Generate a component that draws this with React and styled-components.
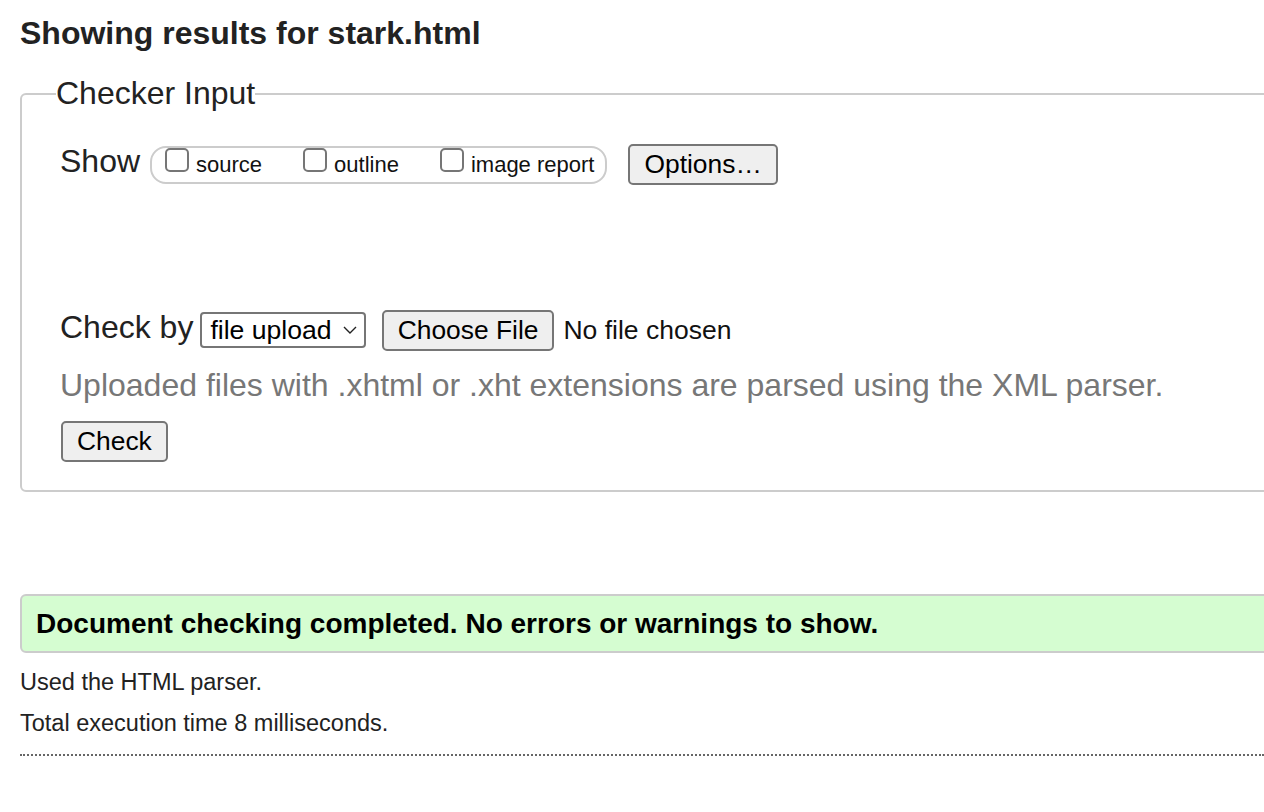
import React from 'react'
import styled, { createGlobalStyle } from 'styled-components'

const GlobalStyle = createGlobalStyle`
html, body {
    margin: 0;
    padding: 0;
    overflow: hidden;
    background: #fff;
}
body {
    font-family: "Liberation Sans", Arial, Helvetica, sans-serif;
    color: #222;
}
`

const Page = styled.div`
width: 1300px;
padding-left: 20px;
`

const Heading = styled.h2`
margin: 15px 0 23px;
font-size: 32px;
font-weight: bold;
line-height: 37px;
color: #222;
`

const Fieldset = styled.fieldset`
margin: 0;
border: 2px solid #ccc;
border-radius: 6px;
padding: 31px 0 28px 38px;
min-inline-size: 0;
`

const Legend = styled.legend`
font-size: 32px;
line-height: 37px;
padding: 0;
margin-left: -4px;
color: #222;
`

const Row = styled.div`
display: flex;
align-items: center;
margin-top: ${(p) => p.top || 0}px;
`

const Label = styled.span`
font-size: 32px;
line-height: 37px;
margin-right: ${(p) => p.gap}px;
margin-bottom: ${(p) => p.lift || 0}px;
`

const OptionGroup = styled.div`
display: flex;
align-items: center;
height: 34px;
border: 2px solid #ccc;
border-radius: 16px;
padding: 0 11px 0 13px;
margin-right: 21px;
`

const Option = styled.label`
display: flex;
align-items: center;
font-size: 22px;
line-height: 25px;
color: #111;
margin-left: ${(p) => (p.first ? 0 : 41)}px;
`

const Box = styled.input`
appearance: none;
-webkit-appearance: none;
width: 24px;
height: 24px;
margin: 0 7px 10px 0;
border: 2px solid #767676;
border-radius: 5px;
background: #fff;
`

const Button = styled.button`
height: 41px;
padding: 0 14px;
font-family: "Liberation Sans", Arial, Helvetica, sans-serif;
font-size: 26.4px;
color: #000;
background: #efefef;
border: 2px solid #767676;
border-radius: 5px;
margin-left: ${(p) => p.left || 0}px;
`

const Select = styled.div`
display: inline-flex;
align-items: center;
height: 36px;
box-sizing: border-box;
padding: 0 7px 0 8px;
border: 2px solid #767676;
border-radius: 4px;
font-size: 26.6px;
color: #000;
margin-right: 16px;
svg {
    margin-left: 11px;
}
`

const FileName = styled.span`
font-size: 26.5px;
color: #111;
margin-left: 9px;
`

const Hint = styled.p`
margin: 16px 0 0;
font-size: 32px;
line-height: 37px;
color: #777;
`

const Success = styled.p`
margin: 102px 0 0;
border: 2px solid #ccc;
border-radius: 6px;
background: #d5fdd1;
padding: 12px 14px 11px;
font-size: 28px;
line-height: 32px;
font-weight: bold;
color: #000;
`

const Info = styled.p`
margin: ${(p) => p.top}px 0 0;
font-size: 23.5px;
line-height: 27px;
color: #222;
`

const Rule = styled.hr`
margin: 17px 0 0;
border: 0;
border-top: 2px dotted #666;
height: 0;
width: 1244px;
`

const Chevron = () => (
    <svg width="14" height="8" viewBox="0 0 14 8">
        <path d="M1 1 L7 7 L13 1" fill="none" stroke="#222" strokeWidth="1.4" />
    </svg>
)

const App = () => {
    return (
        <Page>
            <GlobalStyle />
            <Heading>Showing results for stark.html</Heading>
            <Fieldset>
                <Legend>Checker Input</Legend>
                <Row>
                    <Label gap={10} lift={6}>Show</Label>
                    <OptionGroup>
                        <Option first><Box type="checkbox" />source</Option>
                        <Option><Box type="checkbox" />outline</Option>
                        <Option><Box type="checkbox" />image report</Option>
                    </OptionGroup>
                    <Button>Options…</Button>
                </Row>
                <Row top={123}>
                    <Label gap={7} lift={5}>Check by</Label>
                    <Select>file upload<Chevron /></Select>
                    <Button>Choose File</Button>
                    <FileName>No file chosen</FileName>
                </Row>
                <Hint>Uploaded files with .xhtml or .xht extensions are parsed using the XML parser.</Hint>
                <Row top={17}>
                    <Button left={1}>Check</Button>
                </Row>
            </Fieldset>
            <Success>Document checking completed. No errors or warnings to show.</Success>
            <Info top={16}>Used the HTML parser.</Info>
            <Info top={14}>Total execution time 8 milliseconds.</Info>
            <Rule />
        </Page>
    )
}

export default App
